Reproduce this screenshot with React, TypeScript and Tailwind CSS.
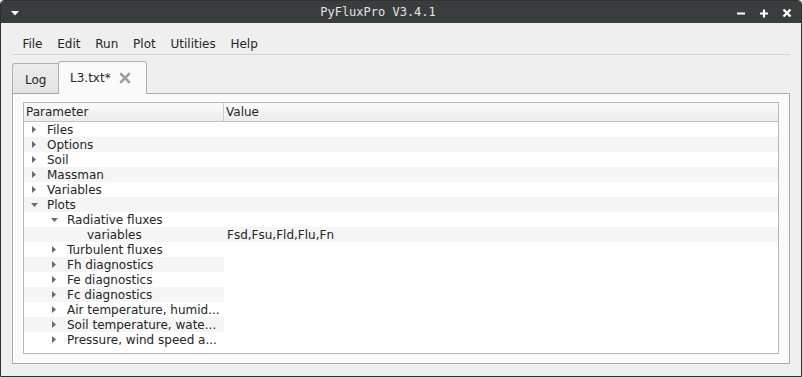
type Row = {
  label: string;
  level: number;
  arrow?: 'right' | 'down';
  value?: string;
};

const ROWS: Row[] = [
  { label: 'Files', level: 0, arrow: 'right' },
  { label: 'Options', level: 0, arrow: 'right' },
  { label: 'Soil', level: 0, arrow: 'right' },
  { label: 'Massman', level: 0, arrow: 'right' },
  { label: 'Variables', level: 0, arrow: 'right' },
  { label: 'Plots', level: 0, arrow: 'down' },
  { label: 'Radiative fluxes', level: 1, arrow: 'down' },
  { label: 'variables', level: 2, value: 'Fsd,Fsu,Fld,Flu,Fn' },
  { label: 'Turbulent fluxes', level: 1, arrow: 'right' },
  { label: 'Fh diagnostics', level: 1, arrow: 'right' },
  { label: 'Fe diagnostics', level: 1, arrow: 'right' },
  { label: 'Fc diagnostics', level: 1, arrow: 'right' },
  { label: 'Air temperature, humid...', level: 1, arrow: 'right' },
  { label: 'Soil temperature, wate...', level: 1, arrow: 'right' },
  { label: 'Pressure, wind speed a...', level: 1, arrow: 'right' },
];

const MENU = ['File', 'Edit', 'Run', 'Plot', 'Utilities', 'Help'];

function Arrow({ dir }: { dir?: 'right' | 'down' }) {
  return (
    <span className="w-[20px] h-[15px] flex items-center justify-center shrink-0">
      {dir === 'right' && (
        <svg width="4" height="7" viewBox="0 0 4 7">
          <path d="M0 0 L4 3.5 L0 7 Z" fill="#6b6b6b" />
        </svg>
      )}
      {dir === 'down' && (
        <svg width="7" height="4" viewBox="0 0 7 4">
          <path d="M0 0 L7 0 L3.5 4 Z" fill="#6b6b6b" />
        </svg>
      )}
    </span>
  );
}

function TreeRow({ row, index }: { row: Row; index: number }) {
  const alt = index % 2 === 1;
  const fullRow = index <= 7;
  return (
    <div className={`flex h-[15px] ${alt && fullRow ? 'bg-[#f5f5f5]' : 'bg-white'}`}>
      <div
        className={`w-[200px] shrink-0 flex items-center ${alt && !fullRow ? 'bg-[#f5f5f5]' : ''}`}
        style={{ paddingLeft: row.level * 20 }}
      >
        <Arrow dir={row.arrow} />
        <span className="ml-[3px] whitespace-nowrap leading-[14px] pt-px">{row.label}</span>
      </div>
      <div className="pl-[3px] leading-[14px] pt-px whitespace-nowrap">{row.value ?? ''}</div>
    </div>
  );
}

export default function App() {
  return (
    <div className="w-[802px] h-[377px] flex flex-col bg-[#efefef] border border-[#2f3233] rounded-t-[4px] overflow-hidden font-['DejaVu_Sans',sans-serif] text-[12px] text-[#232627]">
      {/* Title bar */}
      <div className="h-[22px] shrink-0 bg-[#393d3e] flex items-center relative">
        <svg width="8" height="5" viewBox="0 0 8 5" className="absolute left-[10px] top-[10px]">
          <path d="M0 0 L8 0 L4 4.5 Z" fill="#ffffff" />
        </svg>
        <div className="flex-1 text-center font-['DejaVu_Sans_Mono',monospace] text-[12px] text-[#e4e4e4] leading-[22px] pr-[46px]">
          PyFluxPro V3.4.1
        </div>
        <div className="absolute right-[9px] top-[7px] flex items-center gap-[13px]">
          <svg width="10" height="10" viewBox="0 0 10 10">
            <path d="M1 5.5 H9" stroke="#ffffff" strokeWidth="2.2" />
          </svg>
          <svg width="10" height="10" viewBox="0 0 10 10">
            <path d="M1 5.5 H9 M5 1.5 V9.5" stroke="#ffffff" strokeWidth="2.2" />
          </svg>
          <svg width="10" height="10" viewBox="0 0 10 10">
            <path d="M1.5 1.5 L8.5 8.5 M8.5 1.5 L1.5 8.5" stroke="#ffffff" strokeWidth="2.4" />
          </svg>
        </div>
      </div>

      {/* Menu bar */}
      <div className="mt-[11px] h-[20px] flex items-center px-[14px]">
        {MENU.map((m) => (
          <span key={m} className="px-[7.4px] leading-[19px] pt-px text-[#232627]">
            {m}
          </span>
        ))}
      </div>
      <div className="mx-[11px] h-px bg-[#d3d3d3]" />

      {/* Tabs */}
      <div className="mt-[6px] px-[11px] h-[32px] flex items-end relative z-10">
        <div className="w-[46px] h-[30px] border-l border-t border-[#b0b0b0] rounded-tl-[3px] bg-gradient-to-b from-[#ececec] to-[#e4e4e4] flex items-center pl-[12px]">
          <span className="leading-[14px] mt-[2px]">Log</span>
        </div>
        <div className="w-[89px] h-[33px] -mb-px border-l border-t border-r border-[#b0b0b0] rounded-t-[3px] bg-[#fafafa] flex items-center pl-[11px]">
          <span className="leading-[14px]">L3.txt*</span>
          <svg width="12" height="12" viewBox="0 0 12 12" className="ml-[8px]">
            <path d="M2 2 L10 10 M10 2 L2 10" stroke="#a0a0a0" strokeWidth="2.6" strokeLinecap="round" />
          </svg>
        </div>
      </div>

      {/* Tab pane */}
      <div className="mx-[11px] h-[271px] border border-[#aaaaaa] bg-[#fafafa] pt-[8px] pb-[9px] px-[10px] flex">
        <div className="flex-1 border border-[#b7b7b7] bg-white flex flex-col">
          <div className="h-[19px] flex border-b border-[#c4c4c4] bg-gradient-to-b from-[#fbfbfb] to-[#ececec]">
            <div className="w-[200px] border-r border-[#cbcbcb] pl-[2px] leading-[17px] pt-px">Parameter</div>
            <div className="pl-[2px] leading-[17px] pt-px">Value</div>
          </div>
          <div className="flex flex-col">
            {ROWS.map((r, i) => (
              <TreeRow key={i} row={r} index={i} />
            ))}
          </div>
        </div>
      </div>
    </div>
  );
}
